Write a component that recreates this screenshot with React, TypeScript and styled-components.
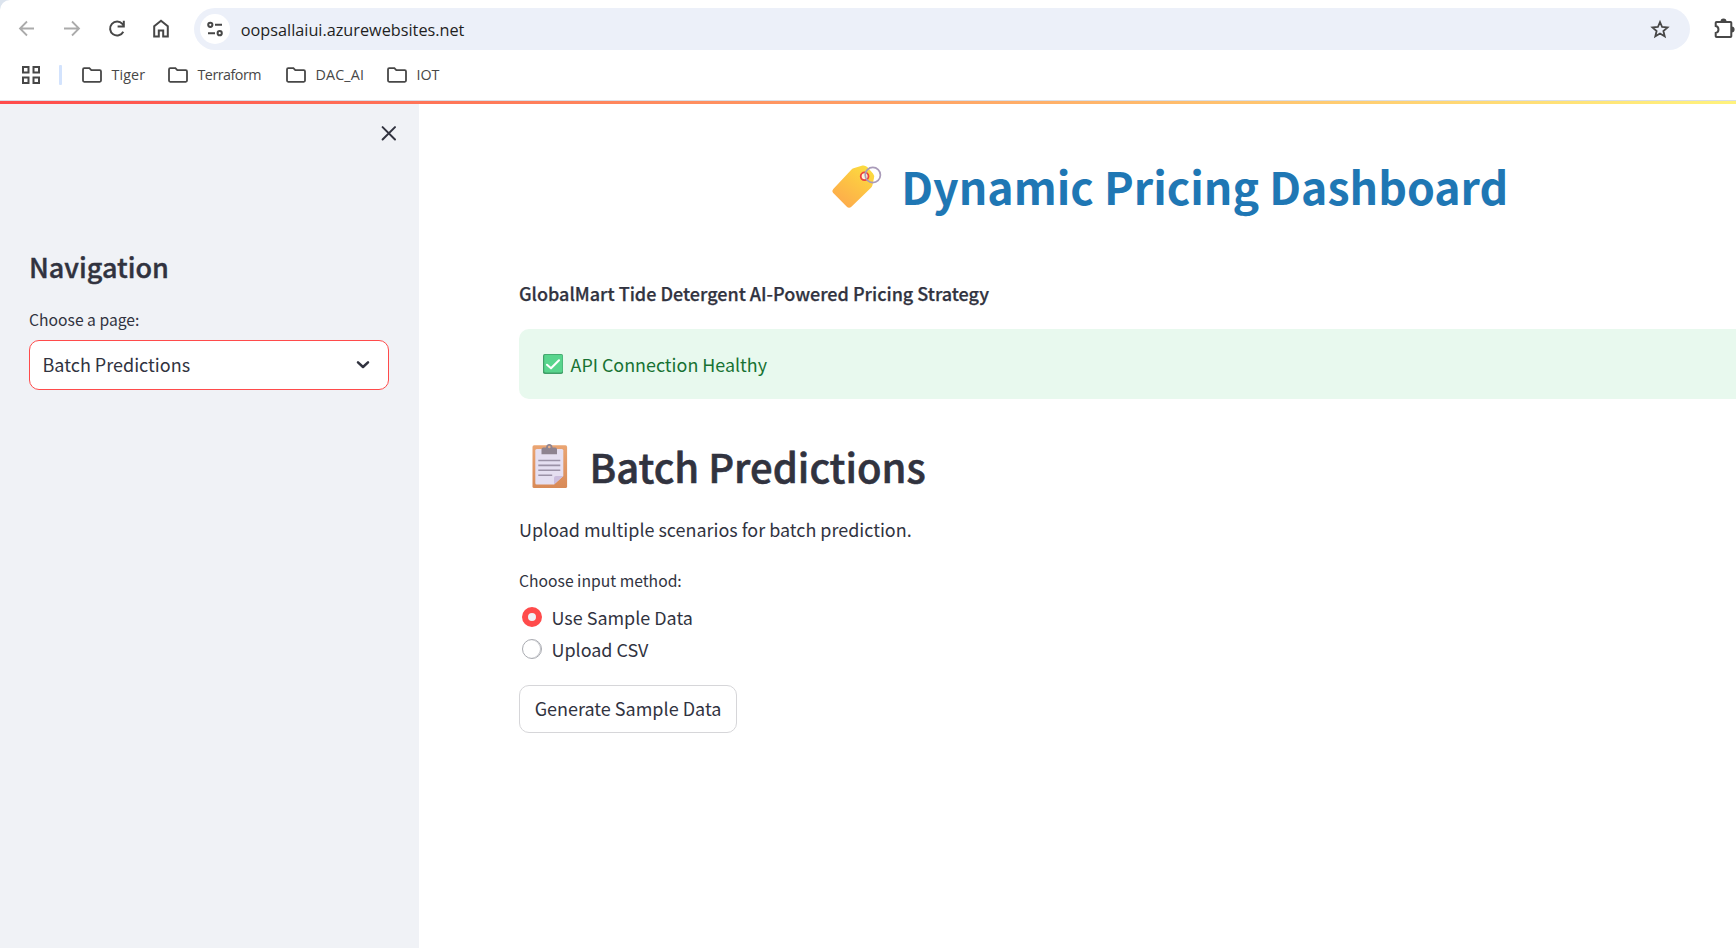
import React from 'react';
import styled, { createGlobalStyle } from 'styled-components';

const ink = '#31333f';

const GlobalStyle = createGlobalStyle`
  * { box-sizing: border-box; }
  body { margin: 0; background: #fff; overflow: hidden; }
  h1, h2, p { margin: 0; }
`;

const Page = styled.div`
  display: flex;
  flex-direction: column;
  width: 100%;
  height: 948px;
  overflow: hidden;
  color: ${ink};
  font-family: 'Noto Sans CJK SC', 'Noto Sans', sans-serif;
`;

/* Browser chrome */
const Chrome = styled.header`
  flex: none;
  height: 101px;
  background: #dce4ee;
  font-family: 'Open Sans', 'Noto Sans', sans-serif;
`;
const ChromeSurface = styled.div`
  height: 101px;
  background: #fff;
  border-top-left-radius: 10px;
  border-bottom: 1px solid #dadfe7;
`;
const Toolbar = styled.div`
  display: flex;
  align-items: center;
  height: 58px;
  padding-left: 15px;
`;
const ToolButton = styled.span<{ $muted?: boolean }>`
  display: flex;
  flex: none;
  width: 24px;
  height: 24px;
  margin-right: 20.8px;
  color: ${p => (p.$muted ? '#ababab' : '#474747')};
`;
const AddressBar = styled.div`
  display: flex;
  flex: none;
  align-items: center;
  width: 1496px;
  height: 42px;
  padding: 0 19px 0 6px;
  border-radius: 21px;
  background: #ecf0f9;
  color: #474747;
`;
const SiteInfo = styled.span`
  display: flex;
  align-items: center;
  justify-content: center;
  width: 30px;
  height: 30px;
  border-radius: 50%;
  background: #fff;
`;
const Url = styled.span`
  flex: 1;
  margin-left: 10.6px;
  color: #1f1f1f;
  font-size: 16.25px;
  line-height: 24px;
  padding-top: 1px;
`;
const Extensions = styled.span`
  display: flex;
  margin-left: 23px;
  color: #474747;
`;
const Bookmarks = styled.nav`
  display: flex;
  align-items: center;
  height: 34px;
  padding-left: 22px;
`;
const Divider = styled.span`
  width: 3px;
  height: 20px;
  margin: 0 19.5px 0 19px;
  border-radius: 1px;
  background: #d3e3fd;
`;
const Bookmark = styled.span<{ $width: number; $tracking: number }>`
  display: flex;
  align-items: center;
  gap: 10px;
  width: ${p => p.$width}px;
  color: #474747;
  font-size: 14.3px;
  line-height: 20px;
  letter-spacing: ${p => p.$tracking}px;
  white-space: nowrap;
`;

/* Application */
const Rainbow = styled.div`
  flex: none;
  height: 3px;
  background: linear-gradient(90deg, #ff4b4b, #fffd80);
  background-size: 1845px 100%;
`;
const Body = styled.div`
  display: flex;
  flex: 1;
  min-height: 0;
`;
const Sidebar = styled.aside`
  flex: none;
  width: 419px;
  padding: 18px 30px 0 29px;
  background: #f0f2f6;
`;
const CloseRow = styled.div`
  display: flex;
  justify-content: flex-end;
  height: 127px;
  margin-right: -12.3px;
`;
const SideTitle = styled.h2`
  font-size: 27px;
  font-weight: 500;
  line-height: 36px;
  -webkit-text-stroke: 0.4px ${ink};
`;
const Label = styled.p`
  font-size: 15.7px;
  line-height: 24px;
`;
const SideLabel = styled(Label)`
  margin: 23px 0 8px;
`;
const Select = styled.div`
  display: flex;
  align-items: center;
  justify-content: space-between;
  width: 360px;
  height: 50px;
  padding: 0 17px 2px 12.5px;
  border: 1px solid #ff4b4b;
  border-radius: 10px;
  background: #fff;
  font-size: 18px;
  line-height: 30px;
`;
const Main = styled.main`
  flex: none;
  width: 1501px;
  padding: 52px 100px 0;
`;
const PageTitle = styled.h1`
  display: flex;
  align-items: center;
  justify-content: center;
  gap: 19.5px;
  height: 60px;
  color: #1f77b4;
  font-size: 44.65px;
  font-weight: 700;
  line-height: 60px;

  svg { margin-top: 2px; }
`;
const Tagline = styled.p`
  margin: 62px 0 21px;
  font-size: 18px;
  font-weight: 500;
  line-height: 30px;
  -webkit-text-stroke: 0.25px ${ink};
`;
const Alert = styled.div`
  display: flex;
  align-items: center;
  gap: 7.5px;
  height: 70px;
  padding: 0 24px;
  border-radius: 10px;
  background: #e8f9ee;
  color: #177233;
  font-size: 17.9px;
  line-height: 30px;
`;
const Heading = styled.h2`
  display: flex;
  align-items: center;
  gap: 21.5px;
  height: 54px;
  margin-top: 40px;
  padding-left: 13px;
  font-size: 40px;
  font-weight: 500;
  line-height: 54px;
  -webkit-text-stroke: 0.6px ${ink};
`;
const Description = styled.p`
  margin: 21px 0 25px;
  font-size: 17.95px;
  line-height: 30px;
`;
const RadioGroup = styled.div`
  display: flex;
  flex-direction: column;
  margin-top: 8px;
`;
const Option = styled.label`
  display: flex;
  align-items: center;
  gap: 9.5px;
  height: 32px;
  padding-left: 3px;
  font-size: 17.95px;
  line-height: 32px;
`;
const Radio = styled.span<{ $checked?: boolean }>`
  width: 20px;
  height: 20px;
  border: ${p => (p.$checked ? '6px solid #ff4b4b' : '1px solid #a9abb1')};
  border-radius: 50%;
  background: ${p => (p.$checked ? '#f0f2f6' : '#fff')};
  box-shadow: ${p => (p.$checked ? 'none' : 'inset -1px 0 0 #c4c5ca')};
`;
const Button = styled.button`
  width: 218px;
  height: 48px;
  margin-top: 20px;
  padding: 0 0 2px;
  border: 1px solid #d6d6d9;
  border-radius: 10px;
  background: #fff;
  color: ${ink};
  font: 18px/30px 'Noto Sans CJK SC', 'Noto Sans', sans-serif;
`;

const ArrowIcon = ({ flip }: { flip?: boolean }) => (
  <svg width="24" height="24" viewBox="0 0 24 24" fill="none" stroke="currentColor" strokeWidth="1.8">
    <path d={flip ? 'M4 11.5H18.6M12 4.5L19 11.5L12 18.5' : 'M19 11.5H5.4M12 4.5L5 11.5L12 18.5'} />
  </svg>
);
const ReloadIcon = () => (
  <svg width="24" height="24" viewBox="0 0 24 24" fill="none" stroke="currentColor" strokeWidth="2">
    <path d="M18.3 14.8A7 7 0 1 1 17.4 6.9L18.7 8.5" />
    <path d="M18.8 3.7V9.5H12.6" />
  </svg>
);
const HomeIcon = () => (
  <svg width="24" height="24" viewBox="0 0 24 24" fill="none" stroke="currentColor" strokeWidth="2">
    <path d="M5.2 19.6V9.2L12 3.8L18.8 9.2V19.6H14.2V13.6H9.8V19.6Z" />
  </svg>
);
const TuneIcon = () => (
  <svg width="18" height="18" viewBox="0 0 18 18" fill="none" stroke="currentColor" strokeWidth="2">
    <circle cx="4.3" cy="4.8" r="2.1" />
    <path d="M9 4.8H16M2 13.2H9" />
    <circle cx="13.7" cy="13.2" r="2.1" />
  </svg>
);
const StarIcon = () => (
  <svg width="22" height="22" viewBox="0 0 22 22" fill="none" stroke="currentColor" strokeWidth="1.8">
    <path d="M11 4L13.1 9L18.5 9.4L14.4 13L15.7 18.3L11 15.5L6.3 18.3L7.6 13L3.5 9.4L8.9 9Z" />
  </svg>
);
const PuzzleIcon = () => (
  <svg width="22" height="24" viewBox="0 0 22 24" fill="none" stroke="currentColor" strokeWidth="2">
    <path d="M3.6 5H17.5Q18.3 5 18.3 5.8V19.2Q18.3 20 17.5 20H3.6Q2.7 20 2.7 19.2V16A3.6 3.6 0 0 0 2.7 9V5.8Q2.7 5 3.6 5Z" />
    <path fill="currentColor" stroke="none" d="M7.5 4.5a3 3 0 0 1 6 0zM18.6 9.5a3 3 0 0 1 0 6z" />
  </svg>
);
const GridIcon = () => (
  <svg width="18" height="18" viewBox="0 0 18 18" fill="none" stroke="#474747" strokeWidth="2">
    <path d="M1 1h5.5v5.5H1zM11.5 1H17v5.5h-5.5zM1 11.5h5.5V17H1zM11.5 11.5H17V17h-5.5z" />
  </svg>
);
const FolderIcon = () => (
  <svg width="20" height="16" viewBox="0 0 20 16" fill="none" stroke="#474747" strokeWidth="1.8">
    <path d="M2.2 1.2H7.4L9.3 3.2H17.8Q19 3.2 19 4.4V13.6Q19 14.8 17.8 14.8H2.2Q1 14.8 1 13.6V2.4Q1 1.2 2.2 1.2Z" />
  </svg>
);
const CloseIcon = () => (
  <svg width="24" height="24" viewBox="0 0 24 24" stroke={ink} strokeWidth="2" strokeLinecap="round">
    <path d="M5.6 5.1L18 17.5M18 5.1L5.6 17.5" />
  </svg>
);
const ChevronIcon = () => (
  <svg width="16" height="16" viewBox="0 0 16 16" fill="none" stroke={ink} strokeWidth="2.5" strokeLinecap="round" strokeLinejoin="round">
    <path d="M3 6.3L8 11L13 6.3" />
  </svg>
);
const TagIcon = () => (
  <svg width="51" height="48" viewBox="0 0 51 48" fill="none">
    <defs>
      <linearGradient id="tag" x1="38" y1="4" x2="12" y2="40" gradientUnits="userSpaceOnUse">
        <stop stopColor="#fbdd3f" />
        <stop offset=".45" stopColor="#fdc643" />
        <stop offset="1" stopColor="#fdae4b" />
      </linearGradient>
    </defs>
    <path fill="url(#tag)" d="M22.5 5.2L31.5 2.5Q34.2 2 36.2 4L42 10.5Q43.6 12.5 43 15L41.5 22Q41.2 23.5 40 24.8L20.4 43.7Q18 46 15.6 43.5L2 29.8Q.4 28 2.3 26L20.3 6.7Q21.3 5.6 22.5 5.2Z" />
    <circle cx="33.6" cy="13.3" r="3.9" fill="#fff3d4" stroke="#eb423d" strokeWidth="1.8" />
    <circle cx="41.8" cy="12" r="7.6" stroke="#a99bb9" strokeWidth="1.7" />
  </svg>
);
const ClipboardIcon = () => (
  <svg width="36" height="46" viewBox="0 0 36 46" fill="none">
    <defs>
      <linearGradient id="board" x1="18" y1="2" x2="18" y2="45" gradientUnits="userSpaceOnUse">
        <stop stopColor="#eaa573" />
        <stop offset="1" stopColor="#d88a57" />
      </linearGradient>
    </defs>
    <rect x=".5" y="2.3" width="34.6" height="42.7" rx="1.6" fill="url(#board)" />
    <path fill="#e5dff1" d="M4.7 6H29.8Q31.3 6 31.3 7.5V33L22 41.5H4.7Q3.3 41.5 3.3 40V7.5Q3.3 6 4.7 6Z" />
    <path fill="#cbbddd" d="M22 41.5V35Q22 33 24 33H31.3Z" />
    <path fill="#8e8390" d="M9.5 6.3Q9.5 4.5 11.5 4.5H14Q14.3 1 17.3 1T20.6 4.5H23Q25 4.5 25 6.3V11.3H9.5Z" />
    <circle cx="17.3" cy="4" r="1.3" fill="#e9b28a" />
    <path stroke="#9b92a7" strokeWidth="1.6" d="M6.3 17.5H28.3M6.3 22.4H28.3M6.3 27.3H28.3M6.3 32.2H20.2" />
  </svg>
);
const CheckIcon = () => (
  <svg width="20" height="20" viewBox="0 0 20 20" fill="none">
    <rect width="20" height="20" rx="1.8" fill="#419f69" />
    <rect x="1.2" y=".7" width="18.3" height="17.8" rx="1.4" fill="#58d58d" />
    <path stroke="#fff" strokeWidth="2.1" strokeLinecap="round" strokeLinejoin="round" d="M4 10.8L8 14.3L16 6.3" />
  </svg>
);

const bookmarks = [
  { name: 'Tiger', width: 86, tracking: 0.1 },
  { name: 'Terraform', width: 118, tracking: -0.5 },
  { name: 'DAC_AI', width: 101, tracking: 0.15 },
  { name: 'IOT', width: 60, tracking: 0 },
];

export default function App() {
  return (
    <Page>
      <GlobalStyle />
      <Chrome>
        <ChromeSurface>
          <Toolbar>
            <ToolButton $muted><ArrowIcon /></ToolButton>
            <ToolButton $muted><ArrowIcon flip /></ToolButton>
            <ToolButton><ReloadIcon /></ToolButton>
            <ToolButton><HomeIcon /></ToolButton>
            <AddressBar>
              <SiteInfo><TuneIcon /></SiteInfo>
              <Url>oopsallaiui.azurewebsites.net</Url>
              <StarIcon />
            </AddressBar>
            <Extensions><PuzzleIcon /></Extensions>
          </Toolbar>
          <Bookmarks>
            <GridIcon />
            <Divider />
            {bookmarks.map(b => (
              <Bookmark key={b.name} $width={b.width} $tracking={b.tracking}>
                <FolderIcon />
                {b.name}
              </Bookmark>
            ))}
          </Bookmarks>
        </ChromeSurface>
      </Chrome>
      <Rainbow />
      <Body>
        <Sidebar>
          <CloseRow><CloseIcon /></CloseRow>
          <SideTitle>Navigation</SideTitle>
          <SideLabel>Choose a page:</SideLabel>
          <Select>
            Batch Predictions
            <ChevronIcon />
          </Select>
        </Sidebar>
        <Main>
          <PageTitle>
            <TagIcon />
            Dynamic Pricing Dashboard
          </PageTitle>
          <Tagline>GlobalMart Tide Detergent AI-Powered Pricing Strategy</Tagline>
          <Alert>
            <CheckIcon />
            API Connection Healthy
          </Alert>
          <Heading>
            <ClipboardIcon />
            Batch Predictions
          </Heading>
          <Description>Upload multiple scenarios for batch prediction.</Description>
          <Label>Choose input method:</Label>
          <RadioGroup>
            <Option><Radio $checked />Use Sample Data</Option>
            <Option><Radio />Upload CSV</Option>
          </RadioGroup>
          <Button>Generate Sample Data</Button>
        </Main>
      </Body>
    </Page>
  );
}
